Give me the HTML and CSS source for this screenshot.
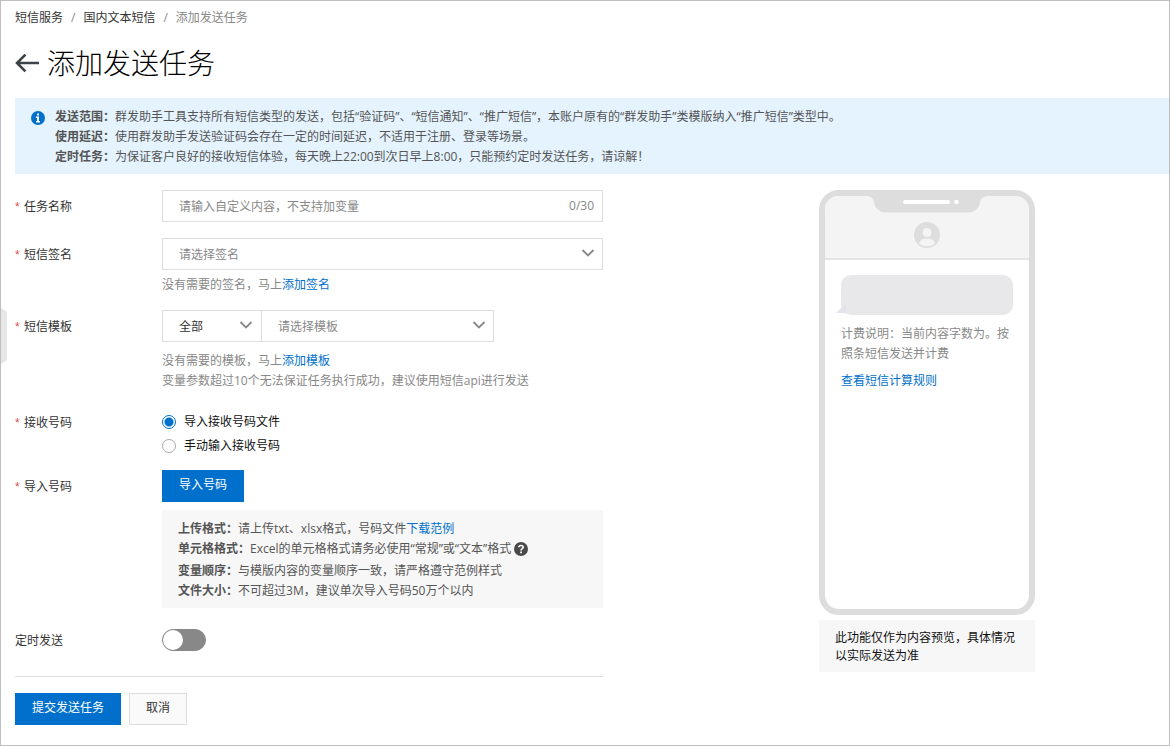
FILE: index.html
```html
<!DOCTYPE html>
<html lang="zh-CN">
<head>
<meta charset="utf-8">
<meta name="viewport" content="width=device-width, initial-scale=1">
<title>添加发送任务</title>
<link rel="stylesheet" href="styles.css">
</head>
<body>
<div class="page">
  <button class="drawer-handle" type="button" aria-label="展开菜单"></button>

  <nav class="breadcrumb" aria-label="breadcrumb">
    <a href="#">短信服务</a>
    <span class="breadcrumb-sep">/</span>
    <a href="#">国内文本短信</a>
    <span class="breadcrumb-sep">/</span>
    <span class="breadcrumb-current">添加发送任务</span>
  </nav>

  <header class="title-bar">
    <a class="back" href="#" aria-label="返回">
      <svg width="24" height="20" viewBox="0 0 24 20" fill="none" stroke="#3c4348" stroke-width="2.6"><path d="M24 10H2.500M10.400 1.600L2 10l8.400 8.400"/></svg>
    </a>
    <h1 class="title">添加发送任务</h1>
  </header>

  <section class="alert">
    <svg class="alert-icon" width="14" height="14" viewBox="0 0 14 14"><circle cx="7" cy="7" r="7" fill="#0070cc"/><path d="M6 2.500h2v2H6zM5 5.600h3v4.500h1v1.400H5v-1.400h1V7H5z" fill="#fff"/></svg>
    <div class="alert-text">
      <p><b>发送范围：</b>群发助手工具支持所有短信类型的发送，包括“验证码”、“短信通知”、“推广短信”，本账户原有的“群发助手”类模版纳入“推广短信”类型中。</p>
      <p><b>使用延迟：</b>使用群发助手发送验证码会存在一定的时间延迟，不适用于注册、登录等场景。</p>
      <p><b>定时任务：</b>为保证客户良好的接收短信体验，每天晚上22:00到次日早上8:00，只能预约定时发送任务，请谅解！</p>
    </div>
  </section>

  <main class="columns">
    <form class="form">
      <div class="row">
        <label class="label" for="task-name"><span class="star">*</span>任务名称</label>
        <div class="field">
          <div class="text-box">
            <input class="text-input" id="task-name" type="text" maxlength="30" placeholder="请输入自定义内容，不支持加变量">
            <span class="counter">0/30</span>
          </div>
        </div>
      </div>

      <div class="row">
        <label class="label" for="sign"><span class="star">*</span>短信签名</label>
        <div class="field">
          <div class="select-box">
            <select class="select placeholder" id="sign"><option>请选择签名</option></select>
            <svg class="chevron" width="14" height="8" viewBox="0 0 14 8"><path d="M1.500 1L7 6.500 12.500 1"/></svg>
          </div>
          <div class="help help-near">没有需要的签名，马上<a class="link" href="#">添加签名</a></div>
        </div>
      </div>

      <div class="row">
        <label class="label" for="template"><span class="star">*</span>短信模板</label>
        <div class="field">
          <div class="select-group">
            <div class="select-box select-type">
              <select class="select" aria-label="模板类型"><option>全部</option></select>
              <svg class="chevron" width="14" height="8" viewBox="0 0 14 8"><path d="M1.500 1L7 6.500 12.500 1"/></svg>
            </div>
            <div class="select-box select-template">
              <select class="select placeholder" id="template"><option>请选择模板</option></select>
              <svg class="chevron" width="14" height="8" viewBox="0 0 14 8"><path d="M1.500 1L7 6.500 12.500 1"/></svg>
            </div>
          </div>
          <div class="help">没有需要的模板，马上<a class="link" href="#">添加模板</a><br>变量参数超过10个无法保证任务执行成功，建议使用短信api进行发送</div>
        </div>
      </div>

      <div class="row" role="radiogroup" aria-labelledby="receiver">
        <div class="label" id="receiver"><span class="star">*</span>接收号码</div>
        <div class="field radios">
          <label class="radio-label"><input class="radio" type="radio" name="receiver" checked>导入接收号码文件</label>
          <label class="radio-label"><input class="radio" type="radio" name="receiver">手动输入接收号码</label>
        </div>
      </div>

      <div class="row">
        <label class="label" for="import"><span class="star">*</span>导入号码</label>
        <div class="field">
          <button class="btn btn-primary" id="import" type="button">导入号码</button>
          <div class="rules">
            <p><b>上传格式：</b>请上传txt、xlsx格式，号码文件<a class="link" href="#">下载范例</a></p>
            <p class="rule-with-icon"><b>单元格格式：</b>Excel的单元格格式请务必使用“常规”或“文本”格式
              <svg class="rule-icon" width="14" height="14" viewBox="0 0 14 14"><circle cx="7" cy="7" r="7" fill="#4a4a4a"/><path d="M4.900 5.300C4.900 2.800 9.200 2.800 9.200 5.300 9.200 6.700 7.100 6.700 7.100 8.400" fill="none" stroke="#fff" stroke-width="1.600"/><path d="M6.200 9.500h1.800v1.700H6.200z" fill="#fff"/></svg>
            </p>
            <p><b>变量顺序：</b>与模版内容的变量顺序一致，请严格遵守范例样式</p>
            <p><b>文件大小：</b>不可超过3M，建议单次导入号码50万个以内</p>
          </div>
        </div>
      </div>

      <div class="row">
        <label class="label" for="timed">定时发送</label>
        <div class="field switch-field"><input class="switch" id="timed" type="checkbox" role="switch"></div>
      </div>

      <div class="actions">
        <button class="btn btn-primary" type="submit">提交发送任务</button>
        <button class="btn btn-normal" type="button">取消</button>
      </div>
    </form>

    <aside class="preview">
      <div class="phone">
        <div class="phone-top">
          <svg class="notch" width="124" height="17" viewBox="0 0 124 17"><path d="M0 0c6 0 8 2 9 6 1 6 5 10.500 12 10.500h82c7 0 11-4.500 12-10.500 1-4 3-6 9-6z" fill="#ddd"/><rect x="38" y="4" width="47" height="4" rx="2" fill="#fff"/><circle cx="91.500" cy="6" r="2.300" fill="#fff"/></svg>
          <svg class="avatar" width="26" height="26" viewBox="0 0 26 26"><circle cx="13" cy="13" r="13" fill="#ddd"/><circle cx="13" cy="10.500" r="4.500" fill="#f4f4f4"/><path d="M5 21.500C6 17.500 9.500 16.500 13 16.500s7 1 8 5C17 25.300 9 25.300 5 21.500z" fill="#f4f4f4"/></svg>
        </div>
        <div class="phone-body">
          <div class="bubble"></div>
          <p class="fee">计费说明：当前内容字数为。按照条短信发送并计费</p>
          <a class="link fee-link" href="#">查看短信计算规则</a>
        </div>
      </div>
      <p class="preview-note">此功能仅作为内容预览，具体情况以实际发送为准</p>
    </aside>
  </main>
</div>
</body>
</html>
```
FILE: styles.css
```css
* {
  box-sizing: border-box;
}

body,
p,
h1 {
  margin: 0;
}

body {
  background: #fff;
  color: #333;
  font: 12px/20px "Open Sans", "Noto Sans CJK SC", sans-serif;
}

button,
input,
select {
  margin: 0;
  font: inherit;
  color: inherit;
}

.page {
  position: relative;
  min-height: 100vh;
  padding: 7px 0 20px 14px;
  border: 1px solid #bfbfbf;
}

.drawer-handle {
  position: absolute;
  left: 0;
  top: 307px;
  width: 6px;
  height: 56px;
  padding: 0;
  border: 0;
  background: #e6e6e6;
  clip-path: polygon(0 0, 100% 4px, 100% 52px, 0 100%);
}

.link {
  color: #0070cc;
  text-decoration: none;
}

/* Page head */

.breadcrumb {
  display: flex;
  gap: 8px;
}

.breadcrumb a {
  color: #333;
  text-decoration: none;
}

.breadcrumb-sep,
.breadcrumb-current {
  color: #888;
}

.title-bar {
  display: flex;
  align-items: center;
  gap: 8px;
  height: 70px;
}

.back {
  display: flex;
}

.title {
  color: #000;
  font-size: 28px;
  font-weight: 300;
  line-height: 38px;
}

.alert {
  display: flex;
  gap: 10px;
  padding: 9px 16px 7px;
  background: #e4f3fe;
  color: #555;
}

.alert-icon {
  flex: none;
  margin-top: 4px;
}

/* Form */

.columns {
  display: flex;
  align-items: flex-start;
  gap: 216px;
  padding-top: 16px;
}

.form {
  display: flex;
  flex: 0 1 588px;
  flex-direction: column;
  gap: 16px;
  min-width: 0;
}

.row {
  display: flex;
}

.label {
  display: flex;
  flex: 0 0 147px;
  line-height: 34px;
  height: 32px;
}

.star {
  flex: 0 0 9px;
  color: #d9534a;
  font-family: "Liberation Sans", sans-serif;
}

.field {
  flex: 1;
  min-width: 0;
}

.text-box {
  display: flex;
  align-items: center;
  height: 32px;
  padding: 0 8px 0 16px;
  border: 1px solid #ddd;
}

.text-input {
  flex: 1;
  min-width: 0;
  height: 100%;
  padding: 0;
  border: 0;
  outline: 0;
  background: none;
}

.text-input::placeholder {
  color: #888;
  opacity: 1;
}

.counter,
.help {
  color: #888;
}

.select-box {
  position: relative;
}

.select {
  display: block;
  width: 100%;
  height: 32px;
  padding: 2px 32px 0 16px;
  border: 1px solid #ddd;
  border-radius: 0;
  appearance: none;
  background: #fff;
}

.placeholder {
  color: #888;
}

.chevron {
  position: absolute;
  top: 11px;
  right: 8px;
  fill: none;
  stroke: #888;
  stroke-width: 1.8;
  pointer-events: none;
}

.select-group {
  display: flex;
}

.select-type {
  flex: 0 0 99px;
}

.select-type .select {
  border-right: 0;
}

.select-template {
  flex: 0 1 233px;
}

.help {
  margin: 9px 0 -1px;
}

.help-near {
  margin-top: 5px;
}

.radios {
  display: flex;
  flex-direction: column;
  gap: 8px;
  padding-top: 8px;
}

.radio-label {
  display: flex;
  align-items: center;
  gap: 8px;
  height: 16px;
  color: #111;
  line-height: 18px;
}

.radio {
  width: 14px;
  height: 14px;
  border: 1px solid #aaa;
  border-radius: 50%;
  appearance: none;
  background: #fff;
}

.radio:checked {
  border-color: #0070cc;
  background: radial-gradient(circle, #0070cc 4px, #fff 5px);
}

.btn {
  height: 32px;
  padding: 0 16px 2px;
  border: 1px solid;
  line-height: 20px;
}

.btn-primary {
  border-color: #0070cc;
  background: #0070cc;
  color: #fff;
}

.btn-normal {
  border-color: #ddd;
  background: #fafafa;
}

.rules {
  margin-top: 8px;
  padding: 9px 16px 7px;
  background: #f7f7f7;
  color: #555;
}

.rule-with-icon {
  padding-bottom: 2px;
}

.rule-icon {
  vertical-align: -3px;
}

.switch-field {
  display: flex;
  align-items: center;
}

.switch {
  width: 44px;
  height: 22px;
  border: 1px solid #888;
  border-radius: 11px;
  appearance: none;
  background: #888;
}

.switch::before {
  content: "";
  display: block;
  width: 20px;
  height: 20px;
  border-radius: 50%;
  background: #fff;
}

.switch:checked {
  border-color: #0070cc;
  background: #0070cc;
}

.switch:checked::before {
  margin-left: auto;
}

.actions {
  display: flex;
  gap: 8px;
  margin-top: 4px;
  padding-top: 16px;
  border-top: 1px solid #ddd;
}

/* Message preview */

.preview {
  flex: 0 0 216px;
}

.phone {
  height: 425px;
  overflow: hidden;
  border: 6px solid #ddd;
  border-radius: 20px;
}

.phone-top {
  display: flex;
  flex-direction: column;
  align-items: center;
  gap: 9px;
  height: 64px;
  border-bottom: 2px solid #e4e4e4;
  background: #f4f4f4;
}

.notch,
.avatar {
  flex: none;
}

.phone-body {
  padding: 15px 16px;
}

.bubble {
  position: relative;
  height: 40px;
  border-radius: 10px;
  background: #e8e8ea;
}

.bubble::before {
  content: "";
  position: absolute;
  left: -5px;
  bottom: 2px;
  width: 10px;
  height: 10px;
  background: #e3e3ec;
  clip-path: polygon(0 100%, 100% 0, 100% 100%);
}

.fee {
  margin: 9px 0 7px;
  color: #888;
}

.preview-note {
  margin-top: 5px;
  padding: 9px 16px 7px;
  background: #f7f7f7;
  color: #111;
  line-height: 18px;
}
```
